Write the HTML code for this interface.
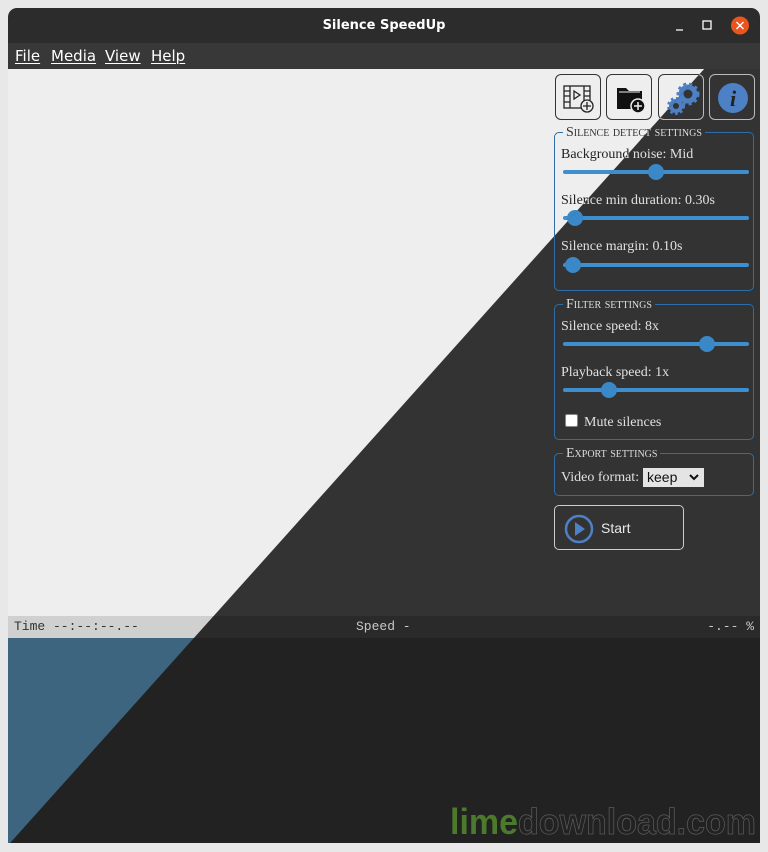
<!DOCTYPE html>
<html><head><meta charset="utf-8">
<style>
*{margin:0;padding:0;box-sizing:border-box}
body{width:768px;height:852px;background:#e8e8e8;position:relative;overflow:hidden;font-family:"Liberation Serif",serif}
.win{position:absolute;left:8px;top:8px;width:752px;height:835px;background:#2c2c2c;border-radius:9px 9px 0 0;overflow:hidden}
.title{position:absolute;left:0;top:0;width:752px;height:35px;text-align:center;color:#fff;font:bold 13px "DejaVu Sans","Liberation Sans",sans-serif;line-height:35px}
.menu{position:absolute;left:0;top:35px;width:752px;height:26px;background:#383838;color:#fff;font:15px "DejaVu Sans","Liberation Sans",sans-serif;line-height:27px}
.menu span{position:absolute;text-decoration:underline;text-decoration-thickness:1px;text-underline-offset:2px}
.layer{position:absolute;left:0;top:0;width:768px;height:852px}
.D{clip-path:polygon(766px 0,768px 0,768px 852px,2px 852px)}
.content{position:absolute;left:8px;top:69px;width:752px;height:547px}
.status{position:absolute;left:8px;top:616px;width:752px;height:22px;font:13px "Liberation Mono","DejaVu Sans Mono",monospace;line-height:22px}
.bottom{position:absolute;left:8px;top:638px;width:752px;height:205px}
.L .content{background:#eeeeee}.D .content{background:#333333}
.L .status{background:#d0d0d0;color:#333}.D .status{background:#2a2a2a;color:#c8c8c8}
.L .bottom{background:#3d6580}.D .bottom{background:#222}
.ib{position:absolute;top:74px;width:46px;height:46px;border-radius:6px;border:1px solid}
.L .ib{border-color:#333;background:#eee}.D .ib{border-color:#bbb;background:#333}
.fs{position:absolute;left:554px;width:200px;border:1px solid #2d6ea8;border-radius:5px}
.lg{position:absolute;left:563px;font-size:14px;font-variant:small-caps;padding:0 3px;line-height:15px}
.L .lg{background:#eee;color:#333}.D .lg{background:#333;color:#ddd}
.lb{position:absolute;left:561px;font-size:14px;line-height:16px;white-space:nowrap}
.L .lb{color:#222}.D .lb{color:#e0e0e0}
.tr{position:absolute;left:563px;width:186px;height:4px;background:#3d8fd0;border-radius:2px}
.th{position:absolute;width:16px;height:16px;border-radius:50%;background:#3b88c8}
.cb{position:absolute;left:565px;top:414px;width:13px;height:13px;background:#fff;border-radius:2px;border:1px solid #888}
.sel{position:absolute;left:643px;top:468px;width:61px;height:19px;background:#e4e4e4;color:#111;font:14px "Liberation Sans",sans-serif;line-height:19px;padding-left:4px}
.start{position:absolute;left:554px;top:505px;width:130px;height:45px;border:1px solid;border-radius:5px}
.L .start{border-color:#333;background:#eee}.D .start{border-color:#ccc;background:#333}
.start span{position:absolute;left:46px;top:14px;font:14px "Liberation Sans",sans-serif}
.L .start span{color:#222}.D .start span{color:#e8e8e8}
</style></head><body>
<div class="win">
<div class="title">Silence SpeedUp</div>
<svg style="position:absolute;left:660px;top:8px" width="90" height="20">
<line x1="8" y1="14" x2="15" y2="14" stroke="#fff" stroke-width="1.3"/>
<rect x="35" y="5" width="8" height="8" fill="none" stroke="#fff" stroke-width="1.3"/>
<circle cx="72" cy="9.5" r="9" fill="#e9541f"/>
<path d="M68.5 6l7 7M75.5 6l-7 7" stroke="#fff" stroke-width="1.4"/>
</svg>
<div class="menu"><span style="left:7px">File</span><span style="left:43px">Media</span><span style="left:97px">View</span><span style="left:143px">Help</span></div>
</div>

<!-- LIGHT -->
<div class="layer L">
<div class="content"></div>
<div class="status"><span style="position:absolute;left:6px">Time --:--:--.--</span><span style="position:absolute;left:348px">Speed -</span><span style="position:absolute;right:6px">-.-- %</span></div>
<div class="bottom"></div>
<div class="ib" style="left:555px"><svg width="46" height="46"><g fill="none" stroke="#222" stroke-width="1.3"><rect x="8" y="11" width="26" height="22"/><line x1="14" y1="11" x2="14" y2="33"/><line x1="28" y1="11" x2="28" y2="33"/><path d="M8 16h6M8 21h6M8 27h6M28 16h6M28 21h6M28 27h6"/><path d="M18 16l6 4-6 4z"/><circle cx="31" cy="31" r="6" fill="#eee"/><path d="M31 27v8M27 31h8"/></g></svg></div>
<div class="ib" style="left:606px"><svg width="46" height="46"><path d="M10 13h9l3 3h13v18H10z" fill="#111"/><path d="M12 17h21" stroke="#eee"/><circle cx="31" cy="31" r="7" fill="#111" stroke="#eee" stroke-width="1.5"/><path d="M31 27v8M27 31h8" stroke="#eee" stroke-width="1.5"/></svg></div>
<div class="ib" style="left:658px"><svg width="46" height="46"><g fill="none" stroke="#4d80c4"><circle cx="29" cy="19" r="7" stroke-width="5"/><circle cx="29" cy="19" r="10" stroke-width="3" stroke-dasharray="3 3"/><circle cx="17" cy="31" r="5" stroke-width="4"/><circle cx="17" cy="31" r="7.5" stroke-width="3" stroke-dasharray="2.5 2.5"/></g></svg></div>
<div class="ib" style="left:709px"><svg width="46" height="46"><circle cx="23" cy="23" r="15" fill="#4d80c4"/><text x="23" y="31" text-anchor="middle" font-family="Liberation Serif" font-style="italic" font-weight="bold" font-size="22" fill="#fff">i</text></svg></div>
<div class="fs" style="top:132px;height:159px"></div><div class="lg" style="top:125px">Silence detect settings</div>
<div class="lb" style="top:147px">Background noise: Mid</div><div class="tr" style="top:170px"></div><div class="th" style="left:648px;top:164px"></div>
<div class="lb" style="top:193px">Silence min duration: 0.30s</div><div class="tr" style="top:216px"></div><div class="th" style="left:567px;top:210px"></div>
<div class="lb" style="top:239px">Silence margin: 0.10s</div><div class="tr" style="top:263px"></div><div class="th" style="left:565px;top:257px"></div>
<div class="fs" style="top:304px;height:136px"></div><div class="lg" style="top:297px">Filter settings</div>
<div class="lb" style="top:319px">Silence speed: 8x</div><div class="tr" style="top:342px"></div><div class="th" style="left:699px;top:336px"></div>
<div class="lb" style="top:365px">Playback speed: 1x</div><div class="tr" style="top:388px"></div><div class="th" style="left:601px;top:382px"></div>
<div class="cb"></div><div class="lb" style="left:584px;top:415px">Mute silences</div>
<div class="fs" style="top:453px;height:43px"></div><div class="lg" style="top:446px">Export settings</div>
<div class="lb" style="top:470px">Video format:</div><div class="sel">keep<svg style="position:absolute;right:5px;top:6px" width="10" height="7"><path d="M1 1l4 4 4-4" fill="none" stroke="#111" stroke-width="2"/></svg></div>
<div class="start"><svg style="position:absolute;left:9px;top:8px" width="30" height="30"><circle cx="15" cy="15" r="13" fill="none" stroke="#4d80c4" stroke-width="2.5"/><path d="M11 8l10 7-10 7z" fill="#4d80c4"/></svg><span>Start</span></div>
</div>

<!-- DARK -->
<div class="layer D">
<div class="content"></div>
<div class="status"><span style="position:absolute;left:6px">Time --:--:--.--</span><span style="position:absolute;left:348px">Speed -</span><span style="position:absolute;right:6px">-.-- %</span></div>
<div class="bottom"></div>
<div class="ib" style="left:555px"><svg width="46" height="46"><g fill="none" stroke="#ddd" stroke-width="1.3"><rect x="8" y="11" width="26" height="22"/><line x1="14" y1="11" x2="14" y2="33"/><line x1="28" y1="11" x2="28" y2="33"/><path d="M18 16l6 4-6 4z"/><circle cx="31" cy="31" r="6" fill="#333"/><path d="M31 27v8M27 31h8"/></g></svg></div>
<div class="ib" style="left:606px"><svg width="46" height="46"><path d="M10 13h9l3 3h13v18H10z" fill="#ddd"/><circle cx="31" cy="31" r="7" fill="#ddd" stroke="#333" stroke-width="1.5"/><path d="M31 27v8M27 31h8" stroke="#333" stroke-width="1.5"/></svg></div>
<div class="ib" style="left:658px"><svg width="46" height="46"><g fill="none" stroke="#4d80c4"><circle cx="29" cy="19" r="7" stroke-width="5"/><circle cx="29" cy="19" r="10" stroke-width="3" stroke-dasharray="3 3"/><circle cx="17" cy="31" r="5" stroke-width="4"/><circle cx="17" cy="31" r="7.5" stroke-width="3" stroke-dasharray="2.5 2.5"/></g></svg></div>
<div class="ib" style="left:709px"><svg width="46" height="46"><circle cx="23" cy="23" r="15" fill="#4d80c4"/><text x="23" y="31" text-anchor="middle" font-family="Liberation Serif" font-style="italic" font-weight="bold" font-size="22" fill="#222">i</text></svg></div>
<div class="fs" style="top:132px;height:159px"></div><div class="lg" style="top:125px">Silence detect settings</div>
<div class="lb" style="top:147px">Background noise: Mid</div><div class="tr" style="top:170px"></div><div class="th" style="left:648px;top:164px"></div>
<div class="lb" style="top:193px">Silence min duration: 0.30s</div><div class="tr" style="top:216px"></div><div class="th" style="left:567px;top:210px"></div>
<div class="lb" style="top:239px">Silence margin: 0.10s</div><div class="tr" style="top:263px"></div><div class="th" style="left:565px;top:257px"></div>
<div class="fs" style="top:304px;height:136px"></div><div class="lg" style="top:297px">Filter settings</div>
<div class="lb" style="top:319px">Silence speed: 8x</div><div class="tr" style="top:342px"></div><div class="th" style="left:699px;top:336px"></div>
<div class="lb" style="top:365px">Playback speed: 1x</div><div class="tr" style="top:388px"></div><div class="th" style="left:601px;top:382px"></div>
<div class="cb"></div><div class="lb" style="left:584px;top:415px">Mute silences</div>
<div class="fs" style="top:453px;height:43px"></div><div class="lg" style="top:446px">Export settings</div>
<div class="lb" style="top:470px">Video format:</div><div class="sel">keep<svg style="position:absolute;right:5px;top:6px" width="10" height="7"><path d="M1 1l4 4 4-4" fill="none" stroke="#111" stroke-width="2"/></svg></div>
<div class="start"><svg style="position:absolute;left:9px;top:8px" width="30" height="30"><circle cx="15" cy="15" r="13" fill="none" stroke="#4d80c4" stroke-width="2.5"/><path d="M11 8l10 7-10 7z" fill="#4d80c4"/></svg><span>Start</span></div>
<svg style="position:absolute;left:448px;top:800px" width="312" height="40"><text x="2" y="34" font-family="Liberation Sans" font-weight="bold" font-size="36" textLength="306" lengthAdjust="spacingAndGlyphs"><tspan fill="#4b7a2c">lime</tspan><tspan fill="none" stroke="#5a5a5a" stroke-width="0.8">download.com</tspan></text></svg>
</div>
</body></html>
